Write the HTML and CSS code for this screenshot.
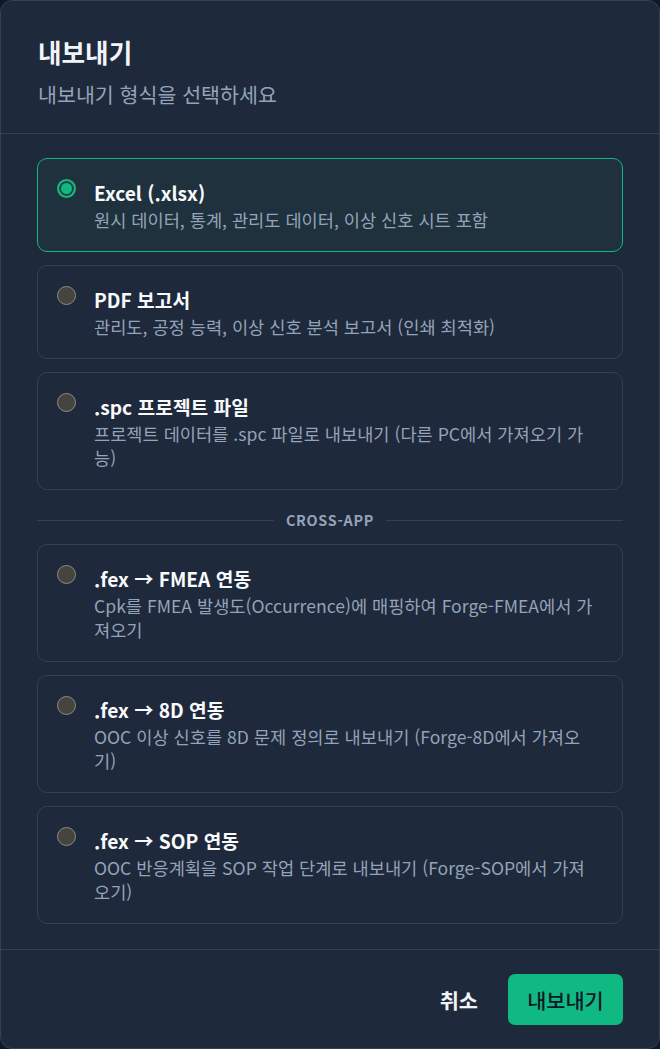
FILE: index.html
```html
<!DOCTYPE html>
<html lang="ko">
<head>
<meta charset="utf-8">
<title>내보내기</title>
<link rel="stylesheet" href="styles.css">
</head>
<body>
<div class="dialog">
  <header class="dialog-header">
    <h1 class="title">내보내기</h1>
    <p class="subtitle">내보내기 형식을 선택하세요</p>
  </header>
  <div class="options">
    <label class="option selected">
      <span class="radio checked"></span>
      <span class="option-text">
        <span class="option-title">Excel (.xlsx)</span>
        <span class="option-desc">원시 데이터, 통계, 관리도 데이터, 이상 신호 시트 포함</span>
      </span>
    </label>
    <label class="option">
      <span class="radio"></span>
      <span class="option-text">
        <span class="option-title">PDF 보고서</span>
        <span class="option-desc">관리도, 공정 능력, 이상 신호 분석 보고서 (인쇄 최적화)</span>
      </span>
    </label>
    <label class="option">
      <span class="radio"></span>
      <span class="option-text">
        <span class="option-title">.spc 프로젝트 파일</span>
        <span class="option-desc">프로젝트 데이터를 .spc 파일로 내보내기 (다른 PC에서 가져오기 가능)</span>
      </span>
    </label>
    <div class="divider"><span class="divider-label">CROSS-APP</span></div>
    <label class="option">
      <span class="radio"></span>
      <span class="option-text">
        <span class="option-title">.fex → FMEA 연동</span>
        <span class="option-desc">Cpk를 FMEA 발생도(Occurrence)에 매핑하여 Forge-FMEA에서 가져오기</span>
      </span>
    </label>
    <label class="option">
      <span class="radio"></span>
      <span class="option-text">
        <span class="option-title">.fex → 8D 연동</span>
        <span class="option-desc">OOC 이상 신호를 8D 문제 정의로 내보내기 (Forge-8D에서 가져오기)</span>
      </span>
    </label>
    <label class="option">
      <span class="radio"></span>
      <span class="option-text">
        <span class="option-title">.fex → SOP 연동</span>
        <span class="option-desc">OOC 반응계획을 SOP 작업 단계로 내보내기 (Forge-SOP에서 가져오기)</span>
      </span>
    </label>
  </div>
  <footer class="dialog-footer">
    <button class="btn btn-ghost" type="button">취소</button>
    <button class="btn btn-primary" type="button">내보내기</button>
  </footer>
</div>
</body>
</html>
```

FILE: styles.css
```css
* {
  box-sizing: border-box;
}

html, body {
  margin: 0;
  padding: 0;
  background: #111827;
}

body {
  font-family: "Noto Sans CJK KR", "Noto Sans", sans-serif;
  color: #f1f5f9;
}

.dialog {
  width: 660px;
  height: 1049px;
  background: #1e293b;
  border: 1px solid #334155;
  border-radius: 12px;
  display: flex;
  flex-direction: column;
  overflow: hidden;
}

.dialog-header {
  padding: 33px 37px 24px;
  border-bottom: 1px solid #334155;
}

.title {
  margin: 0;
  font-size: 25.6px;
  line-height: 36px;
  font-weight: 700;
  color: #f1f5f9;
}

.subtitle {
  margin: 10px 0 0;
  font-size: 20.6px;
  line-height: 29px;
  color: #94a3b8;
}

.options {
  flex: 1;
  padding: 24px 36px;
  display: flex;
  flex-direction: column;
  gap: 13px;
}

.option {
  display: flex;
  align-items: flex-start;
  gap: 18px;
  padding: 19px 27px 19px 19px;
  border: 1px solid #334155;
  border-radius: 10px;
  background: #1e293b;
  cursor: pointer;
}

.option.selected {
  border-color: #10b981;
  background: #1e313d;
}

.radio {
  flex: none;
  width: 19px;
  height: 19px;
  margin-top: 1px;
  border-radius: 50%;
  background: #46443f;
  border: 1.5px solid #8e8a80;
}

.radio.checked {
  background: #10b981;
  border: 2px solid #10b981;
  box-shadow: inset 0 0 0 2px #2d3a3a;
}

.option-text {
  display: flex;
  flex-direction: column;
  min-width: 0;
}

.option-title {
  font-size: 19.2px;
  line-height: 30px;
  font-weight: 700;
  color: #f8fafc;
}

.option-desc {
  font-size: 17.6px;
  line-height: 24px;
  color: #94a3b8;
}

.divider {
  display: flex;
  align-items: center;
  gap: 12px;
  height: 18px;
  margin: 8px 0 2px;
}

.divider::before,
.divider::after {
  content: "";
  flex: 1;
  height: 1px;
  background: #334155;
}

.divider-label {
  font-size: 14.4px;
  line-height: 18px;
  font-weight: 700;
  letter-spacing: 0.05em;
  color: #94a3b8;
}

.dialog-footer {
  display: flex;
  justify-content: flex-end;
  align-items: center;
  gap: 12px;
  padding: 24px 36px 23px;
  border-top: 1px solid #334155;
}

.btn {
  height: 51px;
  border: none;
  border-radius: 7px;
  font-family: inherit;
  font-size: 20.8px;
  line-height: 28px;
  cursor: pointer;
}

.btn-ghost {
  padding: 0 18px;
  background: transparent;
  color: #f1f5f9;
  font-weight: 700;
}

.btn-primary {
  width: 115px;
  padding: 0 16px;
  background: #10b981;
  color: #0f172a;
  font-weight: 500;
}
```
